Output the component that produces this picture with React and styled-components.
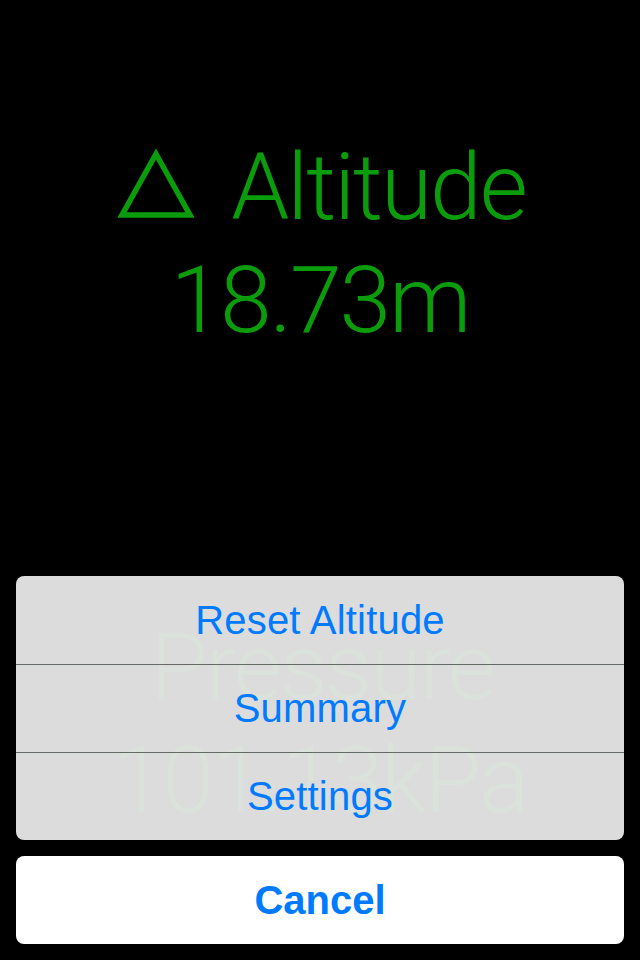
import React from 'react'
import styled, { createGlobalStyle } from 'styled-components'

const GlobalStyle = createGlobalStyle`
    html, body {
        margin: 0;
        padding: 0;
        background: #000;
    }
`

const Screen = styled.div`
    position: relative;
    width: 640px;
    height: 960px;
    background: #000;
    overflow: hidden;
    font-family: Roboto, "Liberation Sans", sans-serif;
`

const Readings = styled.div`
    display: flex;
    flex-direction: column;
    align-items: center;
    gap: 254px;
    padding-top: 131px;
`

const Reading = styled.div`
    display: flex;
    flex-direction: column;
    align-items: center;
    color: #0b9c0b;
    font-size: 93px;
    font-weight: 300;
    line-height: 113px;
    letter-spacing: -2px;
`

const Label = styled.div`
    display: flex;
    align-items: baseline;
    gap: 37px;
    padding-left: 4px;

    svg {
        margin-bottom: 4px;
    }
`

const Value = styled.div`
    white-space: nowrap;
`

const Sheet = styled.div`
    position: absolute;
    left: 16px;
    right: 16px;
    bottom: 16px;
    display: flex;
    flex-direction: column;
    gap: 16px;
    font-family: "Liberation Sans", Arial, sans-serif;
`

const Group = styled.div`
    display: flex;
    flex-direction: column;
    border-radius: 8px;
    overflow: hidden;
    background: rgba(227, 228, 227, 0.965);
`

const Option = styled.div`
    height: 88px;
    box-sizing: border-box;
    display: flex;
    align-items: center;
    justify-content: center;
    color: #007aff;
    font-size: 40px;
    letter-spacing: 0.2px;
    border-top: ${p => (p.$first ? 'none' : '1px solid #646a64')};
`

const CancelButton = styled.div`
    height: 88px;
    display: flex;
    align-items: center;
    justify-content: center;
    border-radius: 8px;
    background: #fff;
    color: #007aff;
    font-size: 40px;
    font-weight: bold;
`

const Delta = () => (
    <svg width="76" height="70" viewBox="0 0 76 70">
        <path d="M38 5 L72 66 L4 66 Z" fill="none" stroke="#0b9c0b" strokeWidth="5.5" strokeLinejoin="miter" />
    </svg>
)

const options = ['Reset Altitude', 'Summary', 'Settings']

export default function App() {
    return (
        <Screen>
            <GlobalStyle />
            <Readings>
                <Reading>
                    <Label>
                        <Delta />
                        <span>Altitude</span>
                    </Label>
                    <Value>18.73m</Value>
                </Reading>
                <Reading>
                    <Label>Pressure</Label>
                    <Value>101.13kPa</Value>
                </Reading>
            </Readings>

            <Sheet>
                <Group>
                    {options.map((o, i) => (
                        <Option key={o} $first={i === 0}>{o}</Option>
                    ))}
                </Group>
                <CancelButton>Cancel</CancelButton>
            </Sheet>
        </Screen>
    )
}
